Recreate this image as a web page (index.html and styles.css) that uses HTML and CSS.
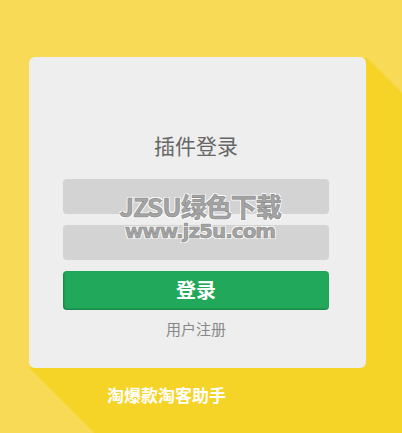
FILE: index.html
```html
<!DOCTYPE html>
<html>
<head>
<meta charset="utf-8">
<link rel="stylesheet" href="styles.css">
</head>
<body>
<div class="page">
  <div class="card">
    <div class="title">插件登录</div>
    <div class="field"></div>
    <div class="field"></div>
    <div class="btn">登录</div>
    <div class="reg">用户注册</div>
    <div class="watermark">
      <div class="wm1">JZSU绿色下载</div>
      <div class="wm2">www.jz5u.com</div>
    </div>
  </div>
  <div class="footer">淘爆款淘客助手</div>
</div>
</body>
</html>
```
FILE: styles.css
```css
html, body {
  margin: 0;
  padding: 0;
}
body {
  background: #f9da56;
  width: 402px;
  height: 433px;
  overflow: hidden;
  font-family: "Noto Sans CJK SC", "Liberation Sans", sans-serif;
}
.page {
  padding-top: 57px;
  padding-left: 29px;
}
.card {
  position: relative;
  width: 337px;
  height: 311px;
  box-sizing: border-box;
  padding: 76px 37px 0 34px;
  background: #eeeeee;
  border-radius: 6px;
  display: flex;
  flex-direction: column;
}
.card::before {
  content: "";
  position: absolute;
  left: 0;
  top: 0;
  width: 373px;
  height: 376px;
  background: #f6d327;
  clip-path: polygon(337px 0, 373px 36px, 373px 376px, 65px 376px, 0 311px);
  z-index: -1;
}
.title {
  height: 24px;
  line-height: 24px;
  font-size: 21px;
  color: #666666;
  text-align: center;
  margin-bottom: 22px;
}
.field {
  height: 35px;
  background: #d3d3d3;
  border-radius: 4px;
  margin-bottom: 11px;
}
.btn {
  height: 39px;
  line-height: 37px;
  background: #22a85a;
  border-radius: 4px;
  box-shadow: inset 1px -1px 2px rgba(0,0,0,0.25);
  color: #ffffff;
  font-size: 20px;
  font-weight: bold;
  text-align: center;
}
.reg {
  margin-top: 9px;
  height: 20px;
  line-height: 20px;
  font-size: 15px;
  color: #888888;
  text-align: center;
}
.watermark {
  position: absolute;
  left: 76px;
  top: 135px;
  width: 190px;
  text-align: center;
  color: #a4a4a4;
  font-weight: bold;
  -webkit-text-stroke: 0.6px #888;
  text-shadow: 0 0 1px #fff, 1px 1px 0 #fff, -1px -1px 0 #fff, 1px -1px 0 #fff, -1px 1px 0 #fff;
}
.wm1 {
  font-size: 26px;
  line-height: 27px;
  height: 27px;
  letter-spacing: -1px;
}
.wm2 {
  margin-top: 2px;
  font-family: "DejaVu Sans", sans-serif;
  font-size: 20px;
  line-height: 20px;
  height: 20px;
  letter-spacing: -1px;
}
.footer {
  margin-top: 17px;
  margin-left: 78px;
  height: 20px;
  line-height: 20px;
  font-size: 17px;
  font-weight: bold;
  color: #ffffff;
}
```
